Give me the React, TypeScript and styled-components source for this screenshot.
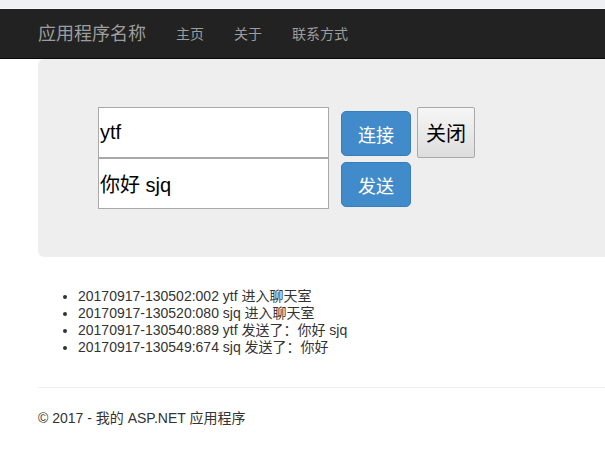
import React from "react";
import styled, { createGlobalStyle } from "styled-components";

const GlobalStyle = createGlobalStyle`
  html, body {
    margin: 0;
    padding: 0;
    background: #fff;
  }
  body {
    font-family: "Liberation Sans", Arial, "Noto Sans CJK SC", sans-serif;
    font-size: 14px;
    line-height: 20px;
    color: #333;
    overflow: hidden;
  }
`;

const TopStrip = styled.div`
  height: 8px;
  background: #eef0f4;
  border-bottom: 1px solid #f6f7f9;
`;

const Navbar = styled.nav`
  height: 49px;
  background: #222;
  border-bottom: 1px solid #080808;
  display: flex;
  align-items: center;
  padding-left: 38px;
`;

const Brand = styled.a`
  font-size: 18px;
  color: #9d9d9d;
  text-decoration: none;
  padding-right: 15px;
  line-height: 20px;
`;

const NavLink = styled.a`
  font-size: 14px;
  color: #9d9d9d;
  text-decoration: none;
  padding: 0 15px;
  line-height: 20px;
`;

const Container = styled.div`
  padding-left: 38px;
`;

const Jumbotron = styled.section`
  background: #eee;
  border-radius: 6px 0 0 6px;
  padding: 48px 60px;
  margin-bottom: 31px;
`;

const ChatForm = styled.div`
  display: grid;
  grid-template-columns: 231px 82px 64px;
  row-gap: 0;
  align-items: start;
`;

const TextBox = styled.input`
  box-sizing: border-box;
  width: 231px;
  height: 51px;
  border: 1px solid #a9a9a9;
  padding: 1px;
  font-family: "Liberation Sans", Arial, "Noto Sans CJK SC", sans-serif;
  font-size: 20px;
  color: #000;
  background: #fff;
  outline: none;
`;

const PrimaryButton = styled.button`
  box-sizing: border-box;
  width: 70px;
  height: 45px;
  margin: 4px 0 0 12px;
  background: #428bca;
  border: 1px solid #357ebd;
  border-radius: 5px;
  color: #fff;
  font-family: "Noto Sans CJK SC", sans-serif;
  font-size: 18px;
  padding: 0;
  cursor: pointer;
`;

const PlainButton = styled.button`
  box-sizing: border-box;
  width: 58px;
  height: 51px;
  margin-left: 6px;
  background: linear-gradient(#f6f6f6, #dddddd);
  border: 1px solid #a9a9a9;
  border-radius: 2px;
  color: #000;
  font-family: "Noto Sans CJK SC", sans-serif;
  font-size: 20px;
  padding: 0;
`;

const MessageList = styled.ul`
  margin: 0;
  padding-left: 40px;
  line-height: 17px;
  font-size: 14px;
  color: #333;
`;

const Rule = styled.hr`
  margin: 31px 0 20px;
  border: 0;
  border-top: 1px solid #eee;
`;

const Footer = styled.footer`
  p {
    margin: 0;
    font-size: 14px;
    line-height: 20px;
  }
`;

const messages = [
  "20170917-130502:002 ytf 进入聊天室",
  "20170917-130520:080 sjq 进入聊天室",
  "20170917-130540:889 ytf 发送了：你好 sjq",
  "20170917-130549:674 sjq 发送了：你好",
];

export default function App() {
  return (
    <>
      <GlobalStyle />
      <TopStrip />
      <Navbar>
        <Brand href="#">应用程序名称</Brand>
        <NavLink href="#">主页</NavLink>
        <NavLink href="#">关于</NavLink>
        <NavLink href="#">联系方式</NavLink>
      </Navbar>
      <Container>
        <Jumbotron>
          <ChatForm>
            <TextBox defaultValue="ytf" />
            <PrimaryButton>连接</PrimaryButton>
            <PlainButton>关闭</PlainButton>
            <TextBox defaultValue="你好 sjq" />
            <PrimaryButton>发送</PrimaryButton>
          </ChatForm>
        </Jumbotron>
        <MessageList>
          {messages.map((m, i) => (
            <li key={i}>{m}</li>
          ))}
        </MessageList>
        <Rule />
        <Footer>
          <p>© 2017 - 我的 ASP.NET 应用程序</p>
        </Footer>
      </Container>
    </>
  );
}
